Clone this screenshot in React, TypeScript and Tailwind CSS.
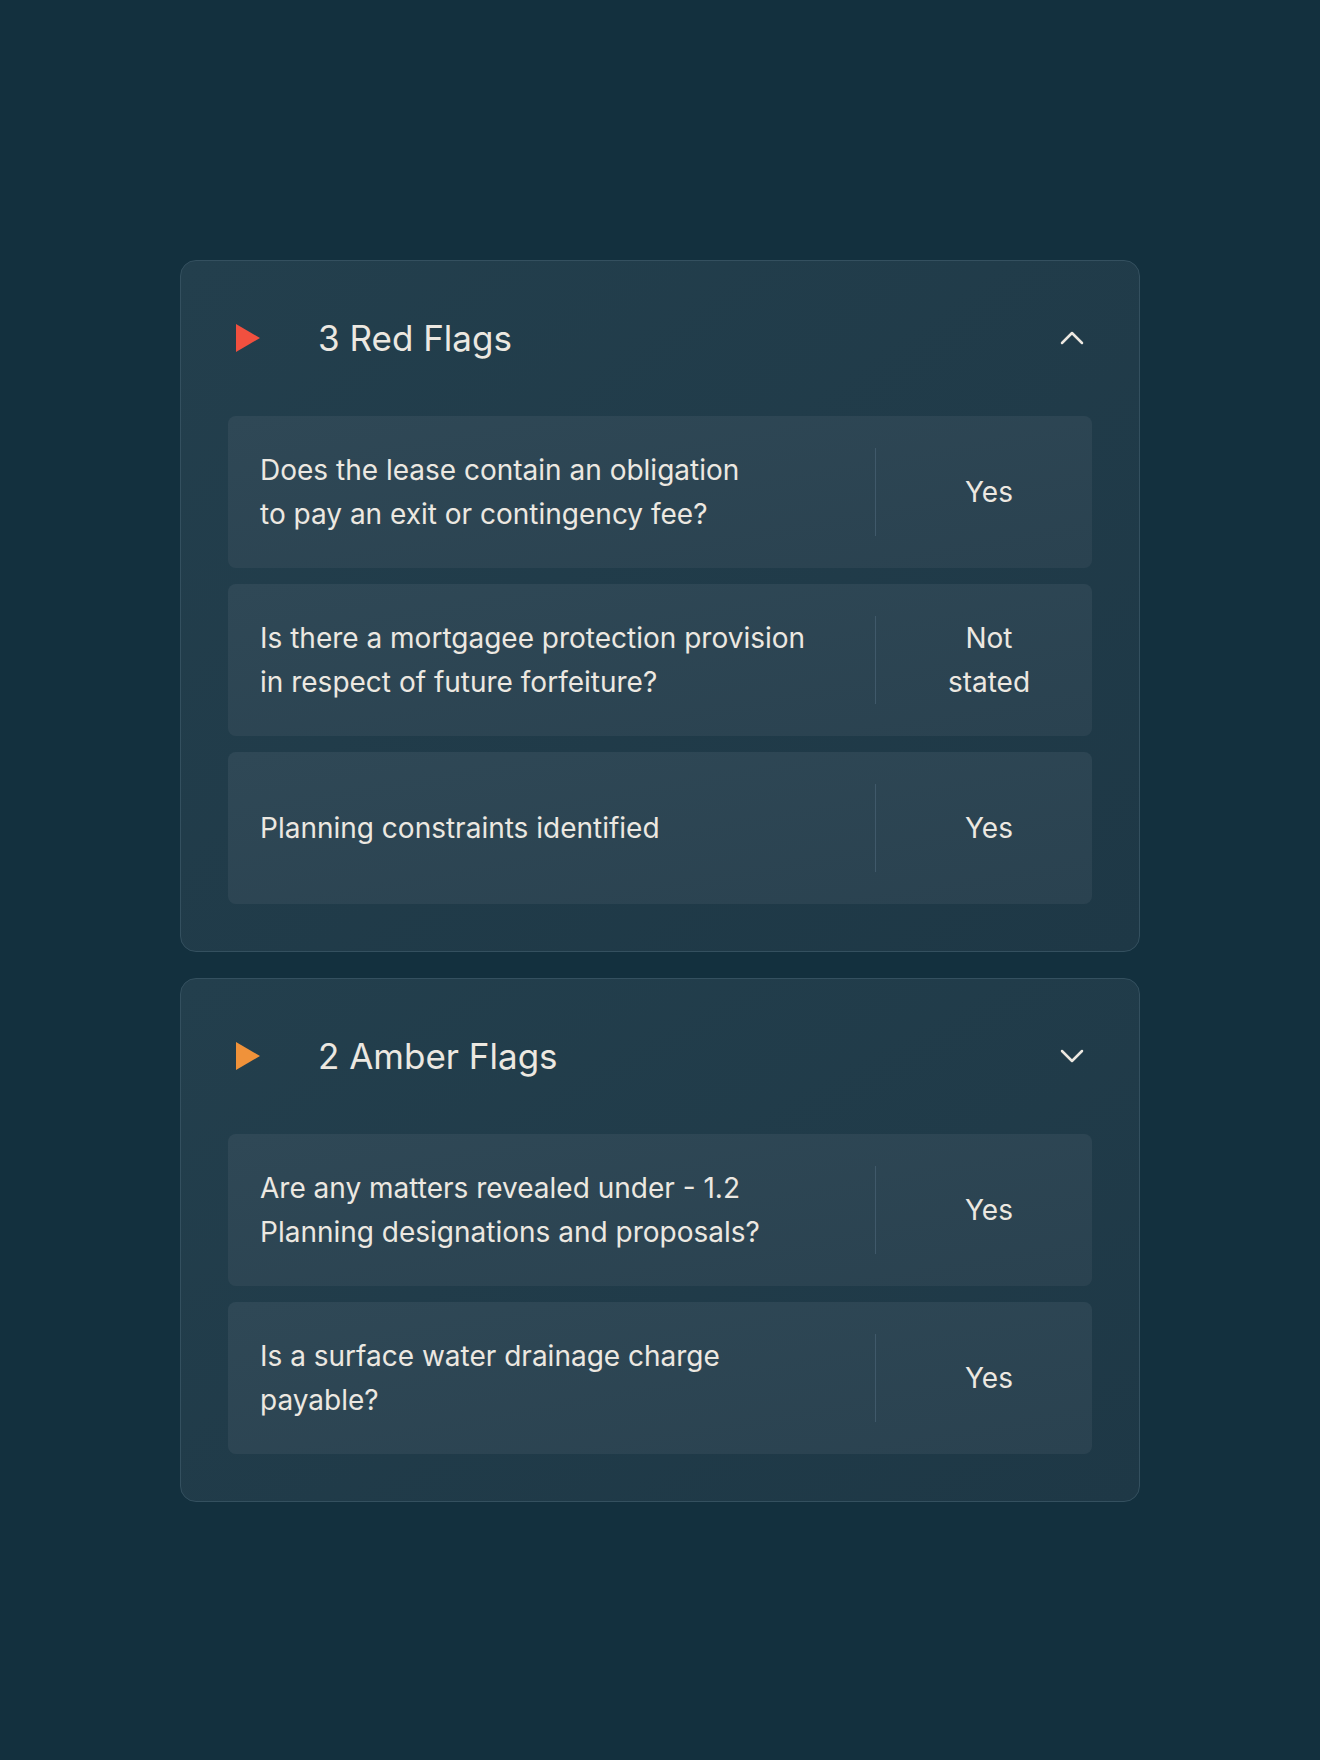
import { ChevronDown, ChevronUp } from 'lucide-react'

type Flag = { question: string[]; answer: string }
type Section = { title: string; color: string; open: boolean; items: Flag[] }

const sections: Section[] = [
  {
    title: '3 Red Flags',
    color: '#f1503f',
    open: true,
    items: [
      { question: ['Does the lease contain an obligation', 'to pay an exit or contingency fee?'], answer: 'Yes' },
      { question: ['Is there a mortgagee protection provision', 'in respect of future forfeiture?'], answer: 'Not stated' },
      { question: ['Planning constraints identified'], answer: 'Yes' },
    ],
  },
  {
    title: '2 Amber Flags',
    color: '#f0923a',
    open: false,
    items: [
      { question: ['Are any matters revealed under - 1.2', 'Planning designations and proposals?'], answer: 'Yes' },
      { question: ['Is a surface water drainage charge', 'payable?'], answer: 'Yes' },
    ],
  },
]

// ── Single question / answer row ─────────────────────────
function FlagRow({ item }: { item: Flag }) {
  return (
    <div className="flex h-[152px] items-center rounded-lg bg-gradient-to-br from-[#2f4856] to-[#2a4250] pl-8">
      <p className="flex-1 text-[28px] leading-[44px] text-[#ece8e1]">
        {item.question.map((line) => (
          <span key={line} className="block whitespace-nowrap">
            {line}
          </span>
        ))}
      </p>
      <div className="h-[88px] w-px bg-[#40596a]" />
      <div className="flex w-[216px] justify-center pl-[10px]">
        <span className="w-[110px] text-center text-[28px] leading-[44px] text-[#ece8e1]">{item.answer}</span>
      </div>
    </div>
  )
}

// ── Collapsible-looking flag group ───────────────────────
function FlagCard({ section }: { section: Section }) {
  const Chevron = section.open ? ChevronUp : ChevronDown
  return (
    <section className="rounded-2xl border border-[#34505f] bg-gradient-to-br from-[#233f4d] to-[#1e3846] p-[47px]">
      <header className="mb-12 flex h-[60px] items-center">
        <svg width="24" height="28" viewBox="0 0 24 28" className="ml-2 shrink-0">
          <polygon points="0,0 24,14 0,28" fill={section.color} />
        </svg>
        <h2 className="ml-[58px] flex-1 text-[35px] text-[#ece8e1]">{section.title}</h2>
        <Chevron size={40} strokeWidth={1.5} className="text-[#ece8e1]" />
      </header>
      <div className="flex flex-col gap-4">
        {section.items.map((item) => (
          <FlagRow key={item.question[0]} item={item} />
        ))}
      </div>
    </section>
  )
}

export default function App() {
  return (
    <div className="min-h-screen bg-[#13303e] pt-[260px]" style={{ fontFamily: 'Inter, sans-serif' }}>
      <div className="mx-auto flex w-[960px] flex-col gap-[26px]">
        {sections.map((s) => (
          <FlagCard key={s.title} section={s} />
        ))}
      </div>
    </div>
  )
}
